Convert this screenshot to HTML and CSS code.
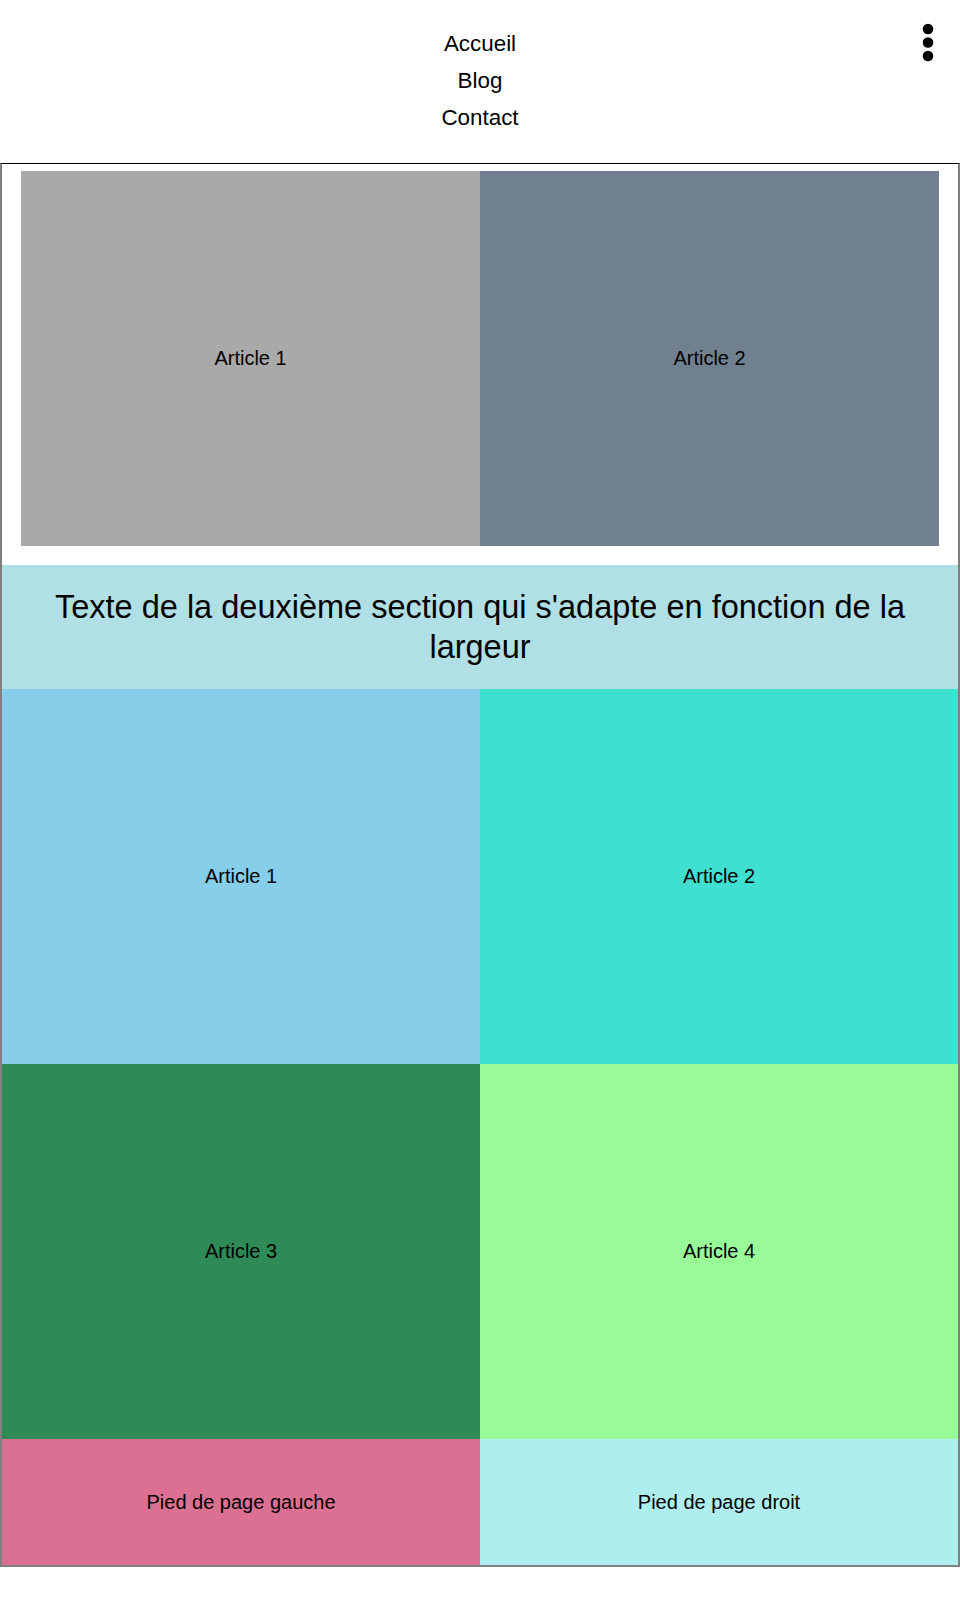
FILE: index.html
```html
<!DOCTYPE html>
<html lang="fr">
<head>
<meta charset="utf-8">
<title>Page</title>
<link rel="stylesheet" href="styles.css">
</head>
<body>
<header class="site-header">
  <nav class="main-nav">
    <a href="#" class="nav-link">Accueil</a>
    <a href="#" class="nav-link">Blog</a>
    <a href="#" class="nav-link">Contact</a>
  </nav>
  <button class="menu-btn" aria-label="Menu">
    <svg width="12" height="40" viewBox="0 0 12 40"><circle cx="6" cy="6" r="5.3"/><circle cx="6" cy="19.5" r="5.3"/><circle cx="6" cy="33" r="5.3"/></svg>
  </button>
</header>
<main class="page">
  <section class="top-section">
    <div class="top-grid">
      <article class="box c-darkgray">Article 1</article>
      <article class="box c-slate">Article 2</article>
    </div>
  </section>
  <section class="text-section">
    <p>Texte de la deuxième section qui s'adapte en fonction de la largeur</p>
  </section>
  <section class="articles">
    <article class="box c-sky">Article 1</article>
    <article class="box c-turq">Article 2</article>
    <article class="box c-sea">Article 3</article>
    <article class="box c-pale">Article 4</article>
  </section>
  <footer class="footer">
    <div class="foot c-pink">Pied de page gauche</div>
    <div class="foot c-pturq">Pied de page droit</div>
  </footer>
</main>
</body>
</html>
```
FILE: styles.css
```css
html, body {
  margin: 0;
  padding: 0;
  background: #fff;
}
body {
  font-family: "Liberation Sans", Arial, sans-serif;
  color: #000;
}
.site-header {
  position: relative;
  height: 163px;
  box-sizing: border-box;
  padding-top: 25px;
}
.main-nav {
  display: flex;
  flex-direction: column;
  align-items: center;
}
.nav-link {
  font-size: 22.4px;
  line-height: 37px;
  color: #000;
  text-decoration: none;
}
.menu-btn {
  position: absolute;
  left: 922px;
  top: 23px;
  padding: 0;
  margin: 0;
  border: 0;
  background: none;
  width: 12px;
  height: 40px;
  display: block;
}
.menu-btn svg {
  display: block;
  fill: #000;
}
.page {
  border-top: 1px solid #000;
  border-left: 2px solid #808080;
  border-right: 2px solid #808080;
  border-bottom: 2px solid #808080;
}
.top-section {
  padding: 7px 19px 19px 19px;
}
.top-grid {
  display: grid;
  grid-template-columns: 1fr 1fr;
}
.box {
  height: 375px;
  display: flex;
  align-items: center;
  justify-content: center;
  font-size: 20px;
}
.text-section {
  background: #b0e0e6;
  padding: 22px 20px;
  text-align: center;
}
.text-section p {
  margin: 0;
  font-size: 32.5px;
  line-height: 40px;
}
.articles {
  display: grid;
  grid-template-columns: 1fr 1fr;
}
.footer {
  display: grid;
  grid-template-columns: 1fr 1fr;
}
.foot {
  height: 126px;
  display: flex;
  align-items: center;
  justify-content: center;
  font-size: 20px;
}
.c-darkgray { background: #a9a9a9; }
.c-slate { background: #708090; }
.c-sky { background: #87ceeb; }
.c-turq { background: #40e0d0; }
.c-sea { background: #2e8b57; }
.c-pale { background: #98fb98; }
.c-pink { background: #db7093; }
.c-pturq { background: #afeeee; }
```
